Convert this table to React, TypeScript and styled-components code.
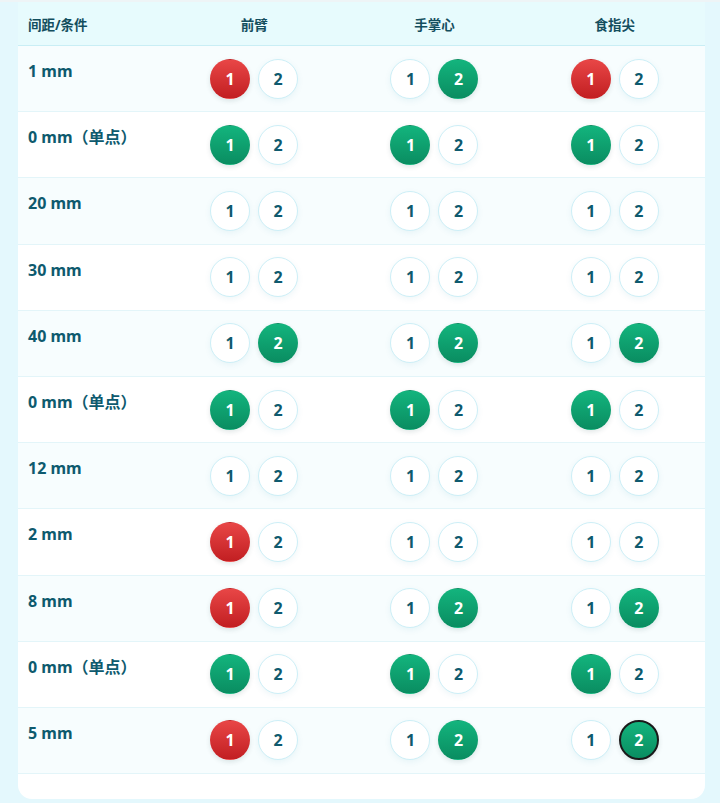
import React from "react";
import styled, { createGlobalStyle } from "styled-components";

const GlobalStyle = createGlobalStyle`
  html, body {
    margin: 0;
    padding: 0;
    background: #e4f8fd;
  }
  body {
    font-family: "Noto Sans", "Noto Sans CJK SC", sans-serif;
  }
`;

const TopStrip = styled.div`
  height: 2px;
  background: #eef4f6;
`;

const Page = styled.div`
  padding: 0 15px 0 18px;
`;

const Card = styled.div`
  background: #ffffff;
  border-radius: 0 0 14px 14px;
  padding-bottom: 25px;
  overflow: hidden;
`;

const Grid = styled.div`
  display: grid;
  grid-template-columns: 146px 1fr 1fr 1fr;
`;

const HeaderRow = styled(Grid)`
  height: 44px;
  background: #e7fbfd;
  border-bottom: 1px solid #c9eef5;
  box-sizing: border-box;
  align-items: center;
`;

const HeadCell = styled.div<{ $left?: boolean }>`
  font-size: 13.5px;
  font-weight: 700;
  color: #134e5e;
  text-align: ${(p) => (p.$left ? "left" : "center")};
  padding-left: ${(p) => (p.$left ? "10px" : "0")};
`;

const Row = styled(Grid)<{ $tint: boolean }>`
  height: 66.2px;
  box-sizing: border-box;
  background: ${(p) => (p.$tint ? "#f7fdfe" : "#ffffff")};
  border-bottom: 1px solid #e3f5f9;
`;

const Label = styled.div`
  padding: 14px 0 0 10px;
  font-size: 16px;
  font-weight: 700;
  color: #0e5a6e;
  line-height: 22px;
`;

const Pair = styled.div`
  display: flex;
  align-items: center;
  justify-content: center;
  gap: 8px;
`;

type Tone = "red" | "green" | "none";

const Dot = styled.button<{ $tone: Tone; $focus?: boolean }>`
  width: 40px;
  height: 40px;
  border-radius: 50%;
  padding: 0;
  display: flex;
  align-items: center;
  justify-content: center;
  font-family: "Noto Sans", sans-serif;
  font-size: 16px;
  font-weight: 700;
  cursor: pointer;
  box-sizing: border-box;
  color: ${(p) => (p.$tone === "none" ? "#0e5a6e" : "#ffffff")};
  background: ${(p) =>
    p.$tone === "red"
      ? "linear-gradient(180deg, #e84646 0%, #c21f22 100%)"
      : p.$tone === "green"
      ? "linear-gradient(180deg, #13b47d 0%, #0a8d61 100%)"
      : "#ffffff"};
  border: ${(p) =>
    p.$focus
      ? "2px solid #1a1a1a"
      : p.$tone === "none"
      ? "1px solid #cdeff7"
      : "1px solid transparent"};
  box-shadow: ${(p) =>
    p.$tone === "none"
      ? "0 2px 6px rgba(0, 130, 160, 0.07)"
      : "0 2px 5px rgba(0, 60, 60, 0.12)"};
`;

type Pick = 0 | 1 | 2;

type RowData = {
  label: string;
  picks: [Pick, Pick, Pick];
  focus?: number;
};

const rows: RowData[] = [
  { label: "1 mm", picks: [1, 2, 1] },
  { label: "0 mm（单点）", picks: [1, 1, 1] },
  { label: "20 mm", picks: [0, 0, 0] },
  { label: "30 mm", picks: [0, 0, 0] },
  { label: "40 mm", picks: [2, 2, 2] },
  { label: "0 mm（单点）", picks: [1, 1, 1] },
  { label: "12 mm", picks: [0, 0, 0] },
  { label: "2 mm", picks: [1, 0, 0] },
  { label: "8 mm", picks: [1, 2, 2] },
  { label: "0 mm（单点）", picks: [1, 1, 1] },
  { label: "5 mm", picks: [1, 2, 2], focus: 2 }
];

// 1 picked = red unless it's a single point row, 2 picked = green
function toneFor(row: RowData, value: 1 | 2, picked: Pick): Tone {
  if (picked !== value) return "none";
  if (value === 2) return "green";
  return row.label.includes("单点") ? "green" : "red";
}

export default function App() {
  return (
    <>
      <GlobalStyle />
      <TopStrip />
      <Page>
        <Card>
          <HeaderRow>
            <HeadCell $left>间距/条件</HeadCell>
            <HeadCell>前臂</HeadCell>
            <HeadCell>手掌心</HeadCell>
            <HeadCell>食指尖</HeadCell>
          </HeaderRow>
          {rows.map((row, i) => (
            <Row key={i} $tint={i % 2 === 0}>
              <Label>{row.label}</Label>
              {row.picks.map((picked, c) => (
                <Pair key={c}>
                  <Dot $tone={toneFor(row, 1, picked)}>1</Dot>
                  <Dot
                    $tone={toneFor(row, 2, picked)}
                    $focus={row.focus === c}
                  >
                    2
                  </Dot>
                </Pair>
              ))}
            </Row>
          ))}
        </Card>
      </Page>
    </>
  );
}
